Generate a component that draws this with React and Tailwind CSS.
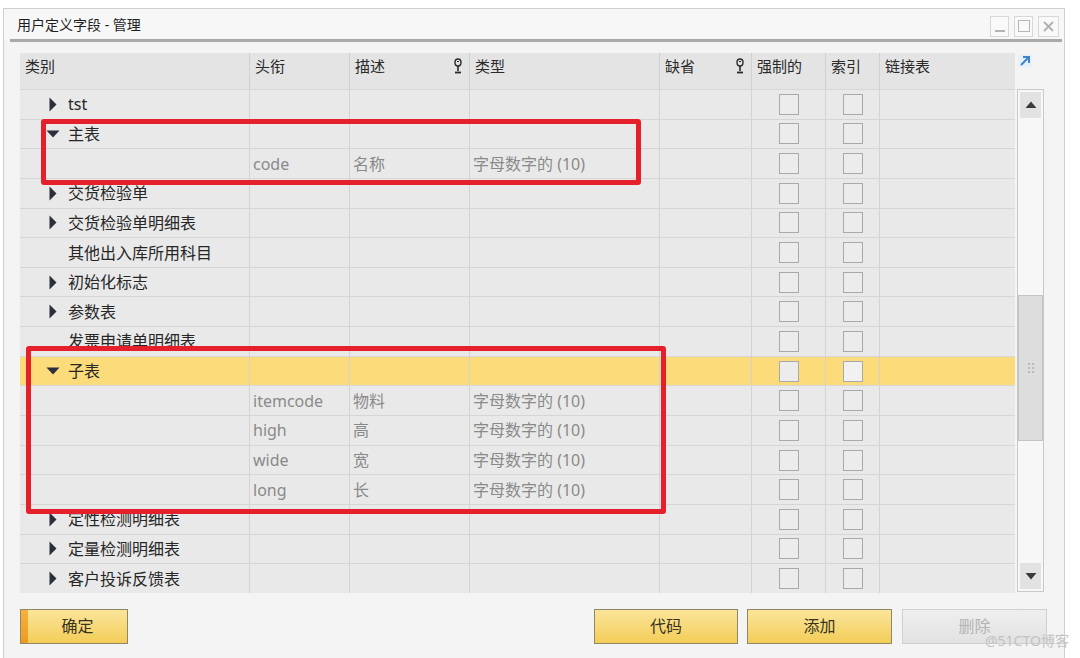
import React from "react";

const COLS = "grid grid-cols-[230px_100px_120px_190px_92px_74px_54px_135px]";

const rows = [
  { kind: "node", label: "tst", arrow: "right" },
  { kind: "node", label: "主表", arrow: "down" },
  { kind: "field", name: "code", desc: "名称", type: "字母数字的 (10)" },
  { kind: "node", label: "交货检验单", arrow: "right" },
  { kind: "node", label: "交货检验单明细表", arrow: "right" },
  { kind: "node", label: "其他出入库所用科目", arrow: null },
  { kind: "node", label: "初始化标志", arrow: "right" },
  { kind: "node", label: "参数表", arrow: "right" },
  { kind: "node", label: "发票申请单明细表", arrow: null },
  { kind: "node", label: "子表", arrow: "down", selected: true },
  { kind: "field", name: "itemcode", desc: "物料", type: "字母数字的 (10)" },
  { kind: "field", name: "high", desc: "高", type: "字母数字的 (10)" },
  { kind: "field", name: "wide", desc: "宽", type: "字母数字的 (10)" },
  { kind: "field", name: "long", desc: "长", type: "字母数字的 (10)" },
  { kind: "node", label: "定性检测明细表", arrow: "right" },
  { kind: "node", label: "定量检测明细表", arrow: "right" },
  { kind: "node", label: "客户投诉反馈表", arrow: "right" },
];

const PinIcon = () => (
  <svg width="10" height="17" viewBox="0 0 10 17" className="shrink-0">
    <ellipse cx="5" cy="4.5" rx="3" ry="3.5" fill="none" stroke="#2a2a2a" strokeWidth="1.4" />
    <path d="M5 8v5" stroke="#2a2a2a" strokeWidth="1.6" />
    <path d="M2 14.5h6" stroke="#2a2a2a" strokeWidth="1.8" />
    <path d="M4 3.5h2" stroke="#2a2a2a" strokeWidth="1" />
  </svg>
);

const Arrow = ({ dir }) => (
  <span className="flex h-[14px] w-[14px] items-center justify-center">
    {dir === "right" && (
      <svg width="8" height="15" viewBox="0 0 8 15">
        <path d="M0.5 0.5L7.5 7.5L0.5 14.5Z" fill="#2b2f3b" />
      </svg>
    )}
    {dir === "down" && (
      <svg width="14" height="8" viewBox="0 0 14 8">
        <path d="M0.5 0.5H13.5L7 7.5Z" fill="#2b2f3b" />
      </svg>
    )}
  </span>
);

const Check = ({ light }) => (
  <span
    className={
      "block h-[21px] w-[20px] border-[1.5px] border-[#a9a9a9] " +
      (light ? "bg-[#f1f1f1]" : "bg-[#ececec]")
    }
  />
);

const Cell = ({ children, className = "", last }) => (
  <div
    className={
      "flex h-full items-center overflow-hidden whitespace-nowrap " +
      (last ? "" : "border-r border-[#d3d3d3] ") +
      className
    }
  >
    {children}
  </div>
);

const Row = ({ row }) => {
  const bg = row.selected ? "bg-[#fcdb7b]" : "bg-[#e9e9e9]";
  return (
    <div className={`${COLS} h-[29.65px] border-t border-[#d6d6d6] ${bg}`}>
      <Cell className="pl-[26px] text-[#262626]">
        {row.kind === "node" && (
          <>
            <Arrow dir={row.arrow} />
            <span className="ml-[8px]">{row.label}</span>
          </>
        )}
      </Cell>
      <Cell className="pl-[3px] text-[#8a8a8a]">{row.kind === "field" && row.name}</Cell>
      <Cell className="pl-[3px] text-[#8a8a8a]">{row.kind === "field" && row.desc}</Cell>
      <Cell className="pl-[3px] text-[#8a8a8a]">{row.kind === "field" && row.type}</Cell>
      <Cell />
      <Cell className="justify-center">
        <Check />
      </Cell>
      <Cell className="justify-center">
        <Check light={row.selected} />
      </Cell>
      <Cell last />
    </div>
  );
};

const HeadCell = ({ children, last, icon }) => (
  <div
    className={
      "flex h-full items-start justify-between pt-[2px] pl-[5px] pr-[6px] " +
      (last ? "" : "border-r border-[#d0d0d0]")
    }
  >
    <span>{children}</span>
    {icon && (
      <span className="pt-[3px]">
        <PinIcon />
      </span>
    )}
  </div>
);

const YellowButton = ({ children, stripe, className = "" }) => (
  <button
    className={
      "flex h-[35px] items-stretch border border-[#8e8768] bg-linear-to-b from-[#fbe59a] to-[#f3cd55] text-[16px] text-[#3a3320] " +
      className
    }
  >
    {stripe && <span className="w-[7px] bg-linear-to-b from-[#f5b13c] to-[#ee9a1e]" />}
    <span className="flex flex-1 items-center justify-center">{children}</span>
  </button>
);

export default function App() {
  return (
    <div className="relative h-[658px] w-[1080px] overflow-hidden bg-white font-['Noto_Sans','Noto_Sans_CJK_SC',sans-serif] text-[15px] text-[#2a2a2a]">
      <div className="ml-[3px] mt-[8px] h-[660px] w-[1062px] border border-[#cfcfcf] bg-[#f4f4f4]">
        {/* title bar */}
        <div className="flex h-[30px] items-center justify-between bg-[#f7f7f7] pl-[13px] pr-[5px]">
          <span className="text-[14px] text-[#1e1e1e]">用户定义字段 - 管理</span>
          <div className="flex gap-[5px] pt-[4px]">
            <span className="flex h-[21px] w-[19px] items-end justify-center border border-[#d8d8d8] bg-[#f9f9f9] pb-[4px]">
              <span className="block h-[1.5px] w-[10px] bg-[#b5b5b5]" />
            </span>
            <span className="flex h-[21px] w-[19px] items-center justify-center border border-[#d8d8d8] bg-[#f9f9f9]">
              <span className="block h-[12px] w-[12px] border-[1.5px] border-[#b5b5b5]" />
            </span>
            <span className="flex h-[21px] w-[21px] items-center justify-center border border-[#d8d8d8] bg-[#f9f9f9]">
              <svg width="11" height="11" viewBox="0 0 11 11">
                <path d="M1 1L10 10M10 1L1 10" stroke="#b0b0b0" strokeWidth="1.8" />
              </svg>
            </span>
          </div>
        </div>
        <div className="ml-[6px] mr-[2px] h-[3px] bg-[#a9a9a9]" />

        {/* grid + scrollbar */}
        <div className="mt-[11px] flex pl-[16px]">
          <div className="w-[995px]">
            <div className={`${COLS} h-[36px] bg-[#e4e4e4] text-[15px] text-[#2a2a2a]`}>
              <HeadCell>类别</HeadCell>
              <HeadCell>头衔</HeadCell>
              <HeadCell icon>描述</HeadCell>
              <HeadCell>类型</HeadCell>
              <HeadCell icon>缺省</HeadCell>
              <HeadCell>强制的</HeadCell>
              <HeadCell>索引</HeadCell>
              <HeadCell last>链接表</HeadCell>
            </div>
            <div className="text-[16px]">
              {rows.map((r, i) => (
                <Row key={i} row={r} />
              ))}
            </div>
          </div>

          <div className="ml-[2px] w-[27px]">
            <div className="h-[36px] pl-[1px] pt-[1px]">
              <svg width="14" height="14" viewBox="0 0 14 14">
                <rect x="0.5" y="0.5" width="13" height="13" fill="#e6f0fa" />
                <path d="M3 11L11 3M5 3H11V9" fill="none" stroke="#3b86d1" strokeWidth="2" />
              </svg>
            </div>
            <div className="flex h-[503px] flex-col border border-[#c9c9c9] bg-[#f7f7f7]">
              <div className="mx-[2px] mt-[2px] flex h-[26px] items-center justify-center bg-[#e2e2e2]">
                <svg width="12" height="8" viewBox="0 0 12 8">
                  <path d="M6 0.5L11.5 7H0.5Z" fill="#3a3a3a" />
                </svg>
              </div>
              <div className="mt-[177px] flex h-[146px] items-center justify-center border border-[#c4c4c4] bg-[#dddddd]">
                <div className="grid grid-cols-2 gap-[2px]">
                  {[0, 1, 2, 3, 4, 5].map((d) => (
                    <span key={d} className="block h-[2px] w-[2px] bg-[#b9b9b9]" />
                  ))}
                </div>
              </div>
              <div className="mx-[2px] mb-[2px] mt-auto flex h-[26px] items-center justify-center bg-[#e2e2e2]">
                <svg width="12" height="8" viewBox="0 0 12 8">
                  <path d="M0.5 1H11.5L6 7.5Z" fill="#3a3a3a" />
                </svg>
              </div>
            </div>
          </div>
        </div>

        {/* buttons */}
        <div className="mt-[16px] flex pl-[16px]">
          <YellowButton stripe className="w-[108px]">
            确定
          </YellowButton>
          <YellowButton className="ml-[466px] w-[144px]">代码</YellowButton>
          <YellowButton className="ml-[9px] w-[145px]">添加</YellowButton>
          <button className="ml-[10px] flex h-[35px] w-[145px] items-center justify-center border border-[#d0d0d0] bg-linear-to-b from-[#efefef] to-[#e2e2e2] text-[16px] text-[#b3b3b3]">
            删除
          </button>
        </div>
      </div>

      {/* annotation boxes */}
      <div className="absolute left-[41px] top-[119px] h-[66px] w-[600px] rounded-[3px] border-[5px] border-[#e5202b]" />
      <div className="absolute left-[26px] top-[346px] h-[168px] w-[640px] rounded-[3px] border-[5px] border-[#e5202b]" />

      {/* watermark */}
      <div className="absolute left-[985px] top-[630px] text-[14px] text-[#c2c2c2]">@51CTO博客</div>
    </div>
  );
}
